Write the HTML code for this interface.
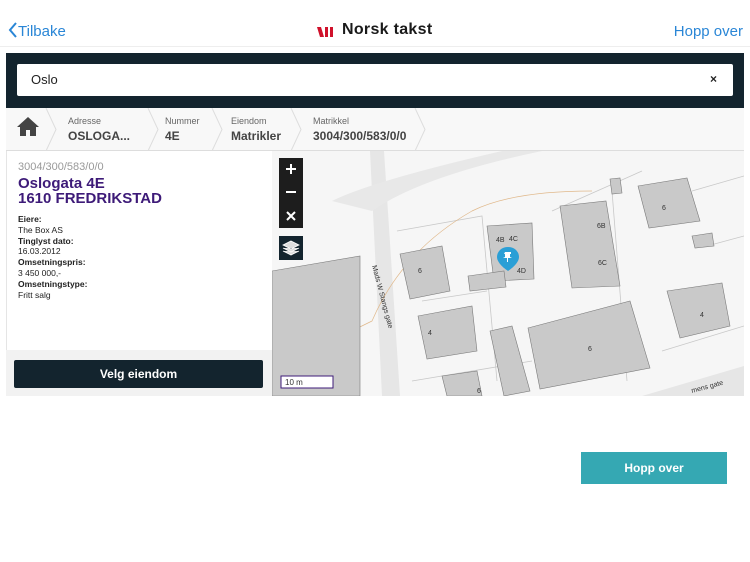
<!DOCTYPE html>
<html><head><meta charset="utf-8"><style>
*{margin:0;padding:0;box-sizing:border-box}
body{width:750px;height:562px;background:#fff;font-family:"Liberation Sans",sans-serif;position:relative;overflow:hidden}
.a{position:absolute}
.nav{color:#2a86d6;font-size:15px}
</style></head><body>
<div class="a nav" style="left:8px;top:22px"><svg width="10" height="16" viewBox="0 0 10 16" style="vertical-align:-2px"><path d="M8 1L2 8l6 7" fill="none" stroke="#2a86d6" stroke-width="2"/></svg>Tilbake</div>
<div class="a nav" style="right:7px;top:23px">Hopp over</div>
<div class="a" style="left:317px;top:25px;width:20px;height:12px"><svg width="20" height="12"><path d="M0 1h4l3 10H3zM8 1h3v10H8zM13 1h3v10h-3z" fill="#d0112b"/></svg></div>
<div class="a" style="left:342px;top:21px;font-size:16px;font-weight:bold;color:#1a1a1a;letter-spacing:.3px">Norsk takst</div>
<div class="a" style="left:0;top:46px;width:750px;height:1px;background:#eee"></div>
<div class="a" style="left:6px;top:53px;width:738px;height:55px;background:#13242e"></div>
<div class="a" style="left:17px;top:64px;width:716px;height:32px;background:#fff;border-radius:2px"></div>
<div class="a" style="left:31px;top:72px;font-size:13px;color:#222">Oslo</div>
<div class="a" style="left:710px;top:72px;font-size:12px;font-weight:bold;color:#222">×</div>
<div class="a" style="left:6px;top:108px;width:738px;height:43px;background:#f8f8f8;border-bottom:1px solid #ddd"></div>
<svg class="a" style="left:6px;top:108px" width="440" height="43">
<g fill="none" stroke="#ddd"><path d="M40 0l10 21.5L40 43M142 0l10 21.5L142 43M206 0l10 21.5L206 43M285 0l10 21.5L285 43M409 0l10 21.5L409 43"/></g>
<path d="M22 9l-11 10h3v9h6v-6h4v6h6v-9h3z" fill="#444"/>
</svg>
<div class="a" style="left:68px;top:116px;font-size:9px;color:#666">Adresse</div>
<div class="a" style="left:68px;top:129px;font-size:12px;font-weight:bold;color:#444">OSLOGA...</div>
<div class="a" style="left:165px;top:116px;font-size:9px;color:#666">Nummer</div>
<div class="a" style="left:165px;top:129px;font-size:12px;font-weight:bold;color:#444">4E</div>
<div class="a" style="left:231px;top:116px;font-size:9px;color:#666">Eiendom</div>
<div class="a" style="left:231px;top:129px;font-size:12px;font-weight:bold;color:#444">Matrikler</div>
<div class="a" style="left:313px;top:116px;font-size:9px;color:#666">Matrikkel</div>
<div class="a" style="left:313px;top:129px;font-size:12px;font-weight:bold;color:#444">3004/300/583/0/0</div>
<div class="a" style="left:6px;top:151px;width:266px;height:245px;background:#fff;border-left:1px solid #e5e5e5"></div>
<div class="a" style="left:6px;top:350px;width:266px;height:46px;background:#f2f2f2"></div>
<div class="a" style="left:18px;top:161px;font-size:11px;color:#999">3004/300/583/0/0</div>
<div class="a" style="left:18px;top:176px;font-size:15px;font-weight:bold;color:#3d1a78;line-height:15px">Oslogata 4E<br>1610 FREDRIKSTAD</div>
<div class="a" style="left:18px;top:214px;font-size:8.5px;color:#222;line-height:10.8px"><b>Eiere:</b><br>The Box AS<br><b>Tinglyst dato:</b><br>16.03.2012<br><b>Omsetningspris:</b><br>3 450 000,-<br><b>Omsetningstype:</b><br>Fritt salg</div>
<div class="a" style="left:14px;top:360px;width:249px;height:28px;background:#13242e;border-radius:2px;color:#fff;font-size:12px;font-weight:bold;text-align:center;line-height:28px">Velg eiendom</div>
<svg class="a" style="left:272px;top:151px" width="472" height="245" viewBox="0 0 472 245">
<rect width="472" height="245" fill="#f6f6f6"/>
<path d="M98 0L112 0 L128 245 L110 245 Z" fill="#e6e6e6"/>
<path d="M60 50 Q100 30 230 0 L270 0 Q150 25 100 60 Z" fill="#e8e8e8"/>
<path d="M370 245 L472 215 L472 245 Z" fill="#e6e6e6"/>
<g fill="none" stroke="#c8c8c8" stroke-width=".8">
<path d="M125 80L210 65L225 230M150 150L215 140M280 60L370 20M340 40L355 230M420 40L472 25M435 95L472 85M390 200L472 175M140 230L260 210"/>
</g>
<path d="M0 215 Q60 190 100 170 Q130 100 200 60 Q240 40 320 40" fill="none" stroke="#e0b88a" stroke-width=".7"/>
<g fill="#c9c9c9" stroke="#7a7a7a" stroke-width=".6">
<polygon points="0,120 88,105 88,245 0,245"/>
<polygon points="215,75 260,72 262,128 222,130"/>
<polygon points="196,125 232,120 234,136 198,140"/>
<polygon points="288,55 334,50 348,135 300,137"/>
<polygon points="256,177 358,150 378,217 268,238"/>
<polygon points="366,35 415,27 428,70 377,77"/>
<polygon points="395,140 450,132 458,175 408,187"/>
<polygon points="128,103 170,95 178,140 138,148"/>
<polygon points="146,165 200,155 205,200 155,208"/>
<polygon points="218,180 240,175 258,240 232,245"/>
<polygon points="170,225 205,220 210,245 175,245"/>
<polygon points="338,28 348,27 350,42 340,43"/>
<polygon points="420,85 440,82 442,95 423,97"/>
</g>
<g font-size="7" fill="#333"><text x="224" y="91">4B</text><text x="237" y="90">4C</text><text x="245" y="122">4D</text><text x="325" y="77">6B</text><text x="326" y="114">6C</text><text x="390" y="59">6</text><text x="428" y="166">4</text><text x="146" y="122">6</text><text x="156" y="184">4</text><text x="316" y="200">6</text><text x="205" y="242">6</text>
<text x="420" y="242" transform="rotate(-15 420 242)">mens gate</text>
<text x="100" y="115" transform="rotate(75 100 115)">Mads W Stangs gate</text></g>
<path d="M236 96c-7 0-11 5-11 10 0 7 11 14 11 14s11-7 11-14c0-5-4-10-11-10z" fill="#2a9fd6"/>
<path d="M233 101h6v2h-1v3l2 1h-4v4h-1v-4h-4l2-1v-3h-1z" fill="#fff"/>
<rect x="7" y="7" width="24" height="70" fill="#1d1d1d"/>
<path d="M19 13v10M14 18h10M14 41h10" stroke="#fff" stroke-width="2"/>
<path d="M15 61l8 8M23 61l-8 8" stroke="#fff" stroke-width="2"/>
<rect x="7" y="85" width="24" height="24" fill="#13242e"/>
<path d="M19 90l8 4-8 4-8-4zM11 97l8 4 8-4M11 100l8 4 8-4" fill="#ddd" stroke="#fff" stroke-width=".8"/>
<rect x="9" y="225" width="52" height="12" fill="#fff" stroke="#3d1a78" stroke-width="1"/>
<text x="13" y="234" font-size="8" fill="#333">10 m</text>
</svg>
<div class="a" style="left:581px;top:452px;width:146px;height:32px;background:#35a8b3;color:#fff;font-size:12px;font-weight:bold;text-align:center;line-height:32px">Hopp over</div>
</body></html>
